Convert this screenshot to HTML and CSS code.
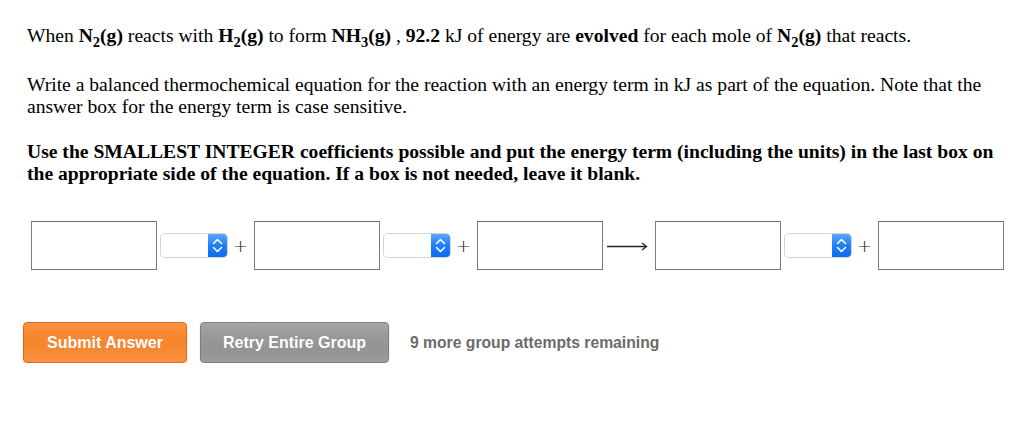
FILE: index.html
```html
<!DOCTYPE html>
<html>
<head>
<meta charset="utf-8">
<link rel="stylesheet" href="styles.css">
</head>
<body>
<div class="page">
  <p class="q q1">When <b>N<sub>2</sub>(g)</b> reacts with <b>H<sub>2</sub>(g)</b> to form <b>NH<sub>3</sub>(g)</b> , <b>92.2</b> kJ of energy are <b>evolved</b> for each mole of <b>N<sub>2</sub>(g)</b> that reacts.</p>
  <p class="q q2">Write a balanced thermochemical equation for the reaction with an energy term in kJ as part of the equation. Note that the answer box for the energy term is case sensitive.</p>
  <p class="q q3"><b>Use the SMALLEST INTEGER coefficients possible and put the energy term (including the units) in the last box on the appropriate side of the equation. If a box is not needed, leave it blank.</b></p>

  <div class="eq">
    <span class="box"></span>
    <span class="sel"><span class="sel-field"></span><span class="sel-btn"><svg width="19" height="23" viewBox="0 0 19 23"><path d="M5.5 9.5 L9.5 5.5 L13.5 9.5" fill="none" stroke="#fff" stroke-width="1.6" stroke-linecap="round" stroke-linejoin="round"/><path d="M5.5 13.5 L9.5 17.5 L13.5 13.5" fill="none" stroke="#fff" stroke-width="1.6" stroke-linecap="round" stroke-linejoin="round"/></svg></span></span>
    <span class="plus">+</span>
    <span class="box"></span>
    <span class="sel"><span class="sel-field"></span><span class="sel-btn"><svg width="19" height="23" viewBox="0 0 19 23"><path d="M5.5 9.5 L9.5 5.5 L13.5 9.5" fill="none" stroke="#fff" stroke-width="1.6" stroke-linecap="round" stroke-linejoin="round"/><path d="M5.5 13.5 L9.5 17.5 L13.5 13.5" fill="none" stroke="#fff" stroke-width="1.6" stroke-linecap="round" stroke-linejoin="round"/></svg></span></span>
    <span class="plus">+</span>
    <span class="box"></span>
    <span class="arrow"><svg width="41" height="12" viewBox="0 0 41 12"><path d="M0 6.5 H39" stroke="#222" stroke-width="1.3" fill="none"/><path d="M35 3 L39.5 6.5 L35 10" stroke="#222" stroke-width="1.2" fill="none"/></svg></span>
    <span class="box"></span>
    <span class="sel"><span class="sel-field"></span><span class="sel-btn"><svg width="19" height="23" viewBox="0 0 19 23"><path d="M5.5 9.5 L9.5 5.5 L13.5 9.5" fill="none" stroke="#fff" stroke-width="1.6" stroke-linecap="round" stroke-linejoin="round"/><path d="M5.5 13.5 L9.5 17.5 L13.5 13.5" fill="none" stroke="#fff" stroke-width="1.6" stroke-linecap="round" stroke-linejoin="round"/></svg></span></span>
    <span class="plus">+</span>
    <span class="box"></span>
  </div>

  <div class="actions">
    <button class="btn btn-submit">Submit Answer</button>
    <button class="btn btn-retry">Retry Entire Group</button>
    <span class="remaining">9 more group attempts remaining</span>
  </div>
</div>
</body>
</html>
```
FILE: styles.css
```css
html, body {
  margin: 0;
  padding: 0;
  background: #fff;
}
.page {
  width: 975px;
  padding: 0 0 0 27px;
  font-family: "Liberation Serif", "Times New Roman", serif;
  font-size: 19.6px;
  color: #000;
}
.q {
  margin: 0;
  line-height: 22px;
}
.q1 {
  padding-top: 25px;
}
.q2 {
  margin-top: 27px;
}
.q3 {
  margin-top: 23px;
}
sub {
  font-size: 14.5px;
  line-height: 0;
  vertical-align: -5px;
}
.eq {
  display: flex;
  align-items: center;
  margin-top: 36px;
  margin-left: 4px;
  height: 49px;
}
.eq > * {
  flex-shrink: 0;
}
.box {
  display: block;
  width: 126px;
  height: 49px;
  box-sizing: border-box;
  border: 1px solid #7b7b7b;
  border-top-color: #6e6e6e;
  background: #fff;
}
.sel {
  display: flex;
  width: 66px;
  height: 23px;
  margin-left: 4px;
  box-sizing: border-box;
  border-radius: 4px;
  overflow: hidden;
  box-shadow: 0 0 0 1px #d4d4d4, 0 1px 1px rgba(0,0,0,0.08);
}
.sel-field {
  flex: 1;
  background: #fff;
}
.sel-btn {
  width: 19px;
  height: 23px;
  background: linear-gradient(#5aa8fb, #1f7ef5 50%, #0d6cf2);
  display: block;
}
.sel-btn svg {
  display: block;
}
.plus {
  width: 27px;
  text-align: center;
  font-family: "DejaVu Sans", sans-serif;
  font-weight: 200;
  font-size: 18px;
  color: #222;
  line-height: 1;
}
.arrow {
  display: block;
  width: 41px;
  margin: 1px 7px 0 4px;
}
.arrow svg {
  display: block;
}
.actions {
  display: flex;
  align-items: center;
  margin-top: 52px;
  margin-left: -4px;
}
.btn {
  height: 41px;
  box-sizing: border-box;
  border-radius: 4px;
  font-family: "Liberation Sans", Arial, sans-serif;
  font-weight: bold;
  font-size: 16px;
  color: #fff;
  padding: 0;
  text-shadow: 0 0 1px rgba(0,0,0,0.1);
}
.btn-submit {
  width: 164px;
  border: 1px solid #e56a1c;
  background: linear-gradient(#fc9444, #f9862f 35%, #f5862f 60%, #fa9140);
  box-shadow: 0 1px 2px rgba(0,0,0,0.15);
}
.btn-retry {
  width: 189px;
  margin-left: 13px;
  border: 1px solid #7f7f7f;
  background: linear-gradient(#a6a6a6, #979797 40%, #949494 70%, #9c9c9c);
  box-shadow: 0 1px 2px rgba(0,0,0,0.15);
}
.remaining {
  margin-left: 21px;
  font-family: "Liberation Sans", Arial, sans-serif;
  font-weight: bold;
  font-size: 15.7px;
  color: #6b6b6b;
}
```
